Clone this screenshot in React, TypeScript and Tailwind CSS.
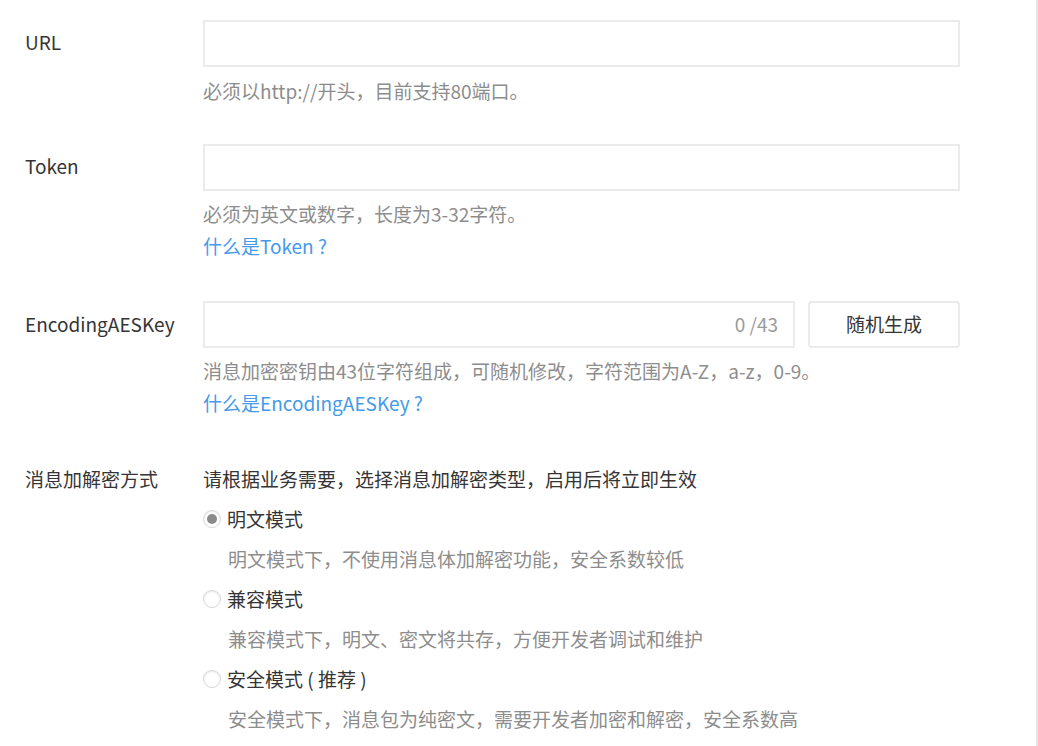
import { useState } from 'react';

const modes = [
  { key: 'plain', title: '明文模式', desc: '明文模式下，不使用消息体加解密功能，安全系数较低' },
  { key: 'compat', title: '兼容模式', desc: '兼容模式下，明文、密文将共存，方便开发者调试和维护' },
  { key: 'safe', title: '安全模式 ( 推荐 )', desc: '安全模式下，消息包为纯密文，需要开发者加密和解密，安全系数高' },
];

function Radio({ checked }: { checked: boolean }) {
  return (
    <span className="w-[18px] h-[18px] rounded-full border border-[#d6d6d6] bg-white shadow-[inset_0_1px_2px_rgba(0,0,0,0.08)] flex items-center justify-center mr-[6px] shrink-0">
      {checked && <span className="w-[10px] h-[10px] rounded-full bg-[#8a8a8a]" />}
    </span>
  );
}

export default function App() {
  const [url, setUrl] = useState('');
  const [token, setToken] = useState('');
  const [aesKey, setAesKey] = useState('');
  const [mode, setMode] = useState('plain');

  return (
    <div
      className="h-[746px] w-full bg-white border-r-2 border-[#e4e4e4] overflow-hidden text-[19px] text-[#353535]"
      style={{ fontFamily: '"Noto Sans CJK SC", "Noto Sans", sans-serif' }}
    >
      <div className="pt-[20px] pl-[25px]">
        {/* URL */}
        <div className="flex mb-[37px]">
          <label className="w-[178px] shrink-0 h-[47px] leading-[43px]">URL</label>
          <div>
            <input
              value={url}
              onChange={e => setUrl(e.target.value)}
              className="block w-[757px] h-[47px] border-2 border-[#ebebeb] px-3 outline-none"
            />
            <p className="mt-[8px] leading-[32px] text-[#8d8d8d]">必须以http://开头，目前支持80端口。</p>
          </div>
        </div>

        {/* Token */}
        <div className="flex mb-[39px]">
          <label className="w-[178px] shrink-0 h-[47px] leading-[43px]">Token</label>
          <div>
            <input
              value={token}
              onChange={e => setToken(e.target.value)}
              className="block w-[757px] h-[47px] border-2 border-[#ebebeb] px-3 outline-none"
            />
            <p className="mt-[7px] leading-[32px] text-[#8d8d8d]">必须为英文或数字，长度为3-32字符。</p>
            <a className="block leading-[32px] text-[#459ae9] cursor-pointer">什么是Token ?</a>
          </div>
        </div>

        {/* EncodingAESKey */}
        <div className="flex mb-[40px]">
          <label className="w-[178px] shrink-0 h-[47px] leading-[45px]">EncodingAESKey</label>
          <div>
            <div className="flex gap-[13px]">
              <div className="w-[592px] h-[47px] border-2 border-[#ebebeb] flex items-center">
                <input
                  value={aesKey}
                  maxLength={43}
                  onChange={e => setAesKey(e.target.value)}
                  className="flex-1 h-full px-3 outline-none min-w-0"
                />
                <span className="pr-[15px] text-[#9a9a9a]">{aesKey.length} /43</span>
              </div>
              <button className="w-[152px] h-[47px] border-2 border-[#ebebeb] rounded-[4px] bg-white text-[#353535]">
                随机生成
              </button>
            </div>
            <p className="mt-[7px] leading-[32px] text-[#8d8d8d]">消息加密密钥由43位字符组成，可随机修改，字符范围为A-Z，a-z，0-9。</p>
            <a className="block leading-[32px] text-[#459ae9] cursor-pointer">什么是EncodingAESKey ?</a>
          </div>
        </div>

        {/* 消息加解密方式 */}
        <div className="flex">
          <label className="w-[178px] shrink-0 leading-[40px]">消息加解密方式</label>
          <div>
            <p className="leading-[40px]">请根据业务需要，选择消息加解密类型，启用后将立即生效</p>
            {modes.map(m => (
              <div key={m.key}>
                <label className="flex items-center h-[40px] cursor-pointer" onClick={() => setMode(m.key)}>
                  <Radio checked={mode === m.key} />
                  <span>{m.title}</span>
                </label>
                <p className="pl-[25px] leading-[40px] text-[#8d8d8d]">{m.desc}</p>
              </div>
            ))}
          </div>
        </div>
      </div>
    </div>
  );
}
